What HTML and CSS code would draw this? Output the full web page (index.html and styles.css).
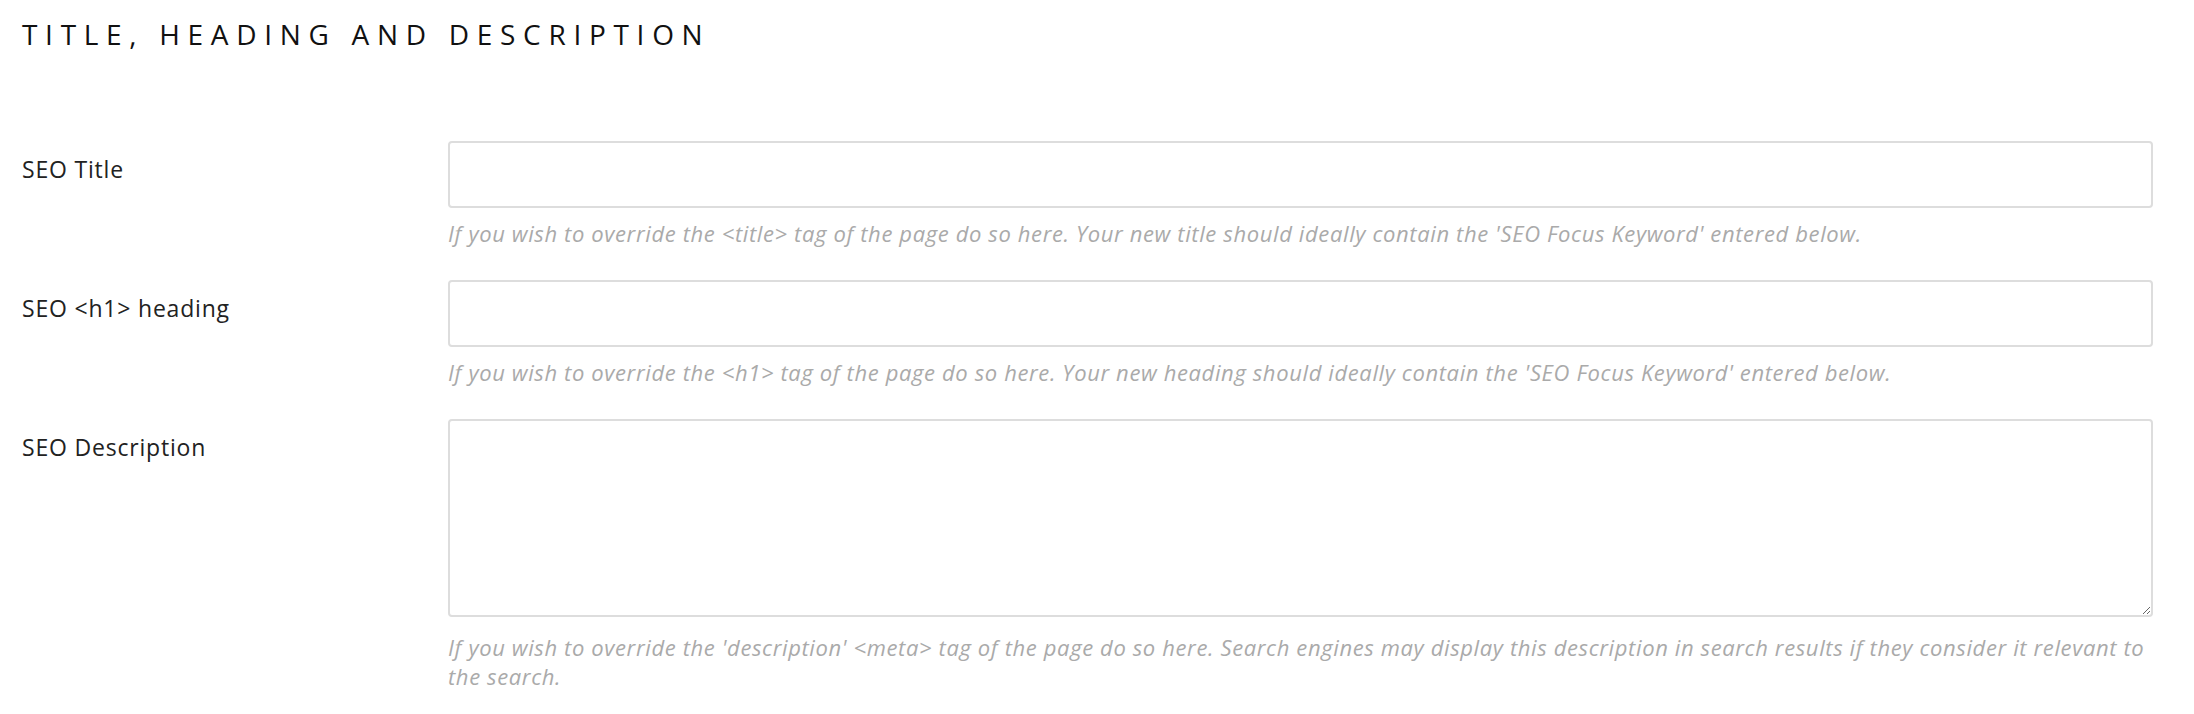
FILE: index.html
```html
<!DOCTYPE html>
<html lang="en">
<head>
  <meta charset="UTF-8">
  <title>SEO settings</title>
  <link rel="stylesheet" href="styles.css">
</head>
<body>
  <section class="seo-panel">
    <h2 class="panel-title">Title, Heading and Description</h2>

    <div class="field-row">
      <label class="field-label" for="seoTitle">SEO Title</label>
      <div class="field-body">
        <input type="text" id="seoTitle" class="field-input">
        <p class="field-help">If you wish to override the &lt;title&gt; tag of the page do so here. Your new title should ideally contain the 'SEO Focus Keyword' entered below.</p>
      </div>
    </div>

    <div class="field-row">
      <label class="field-label" for="seoHeading">SEO &lt;h1&gt; heading</label>
      <div class="field-body">
        <input type="text" id="seoHeading" class="field-input">
        <p class="field-help">If you wish to override the &lt;h1&gt; tag of the page do so here. Your new heading should ideally contain the 'SEO Focus Keyword' entered below.</p>
      </div>
    </div>

    <div class="field-row">
      <label class="field-label" for="seoDescription">SEO Description</label>
      <div class="field-body">
        <textarea id="seoDescription" class="field-input field-textarea"></textarea>
        <p class="field-help">If you wish to override the 'description' &lt;meta&gt; tag of the page do so here. Search engines may display this description in search results if they consider it relevant to the search.</p>
      </div>
    </div>
  </section>
</body>
</html>
```

FILE: styles.css
```css
body {
  margin: 0;
  background-color: #fff;
  color: #1a1a1a;
  font-family: "Open Sans", Lato, sans-serif;
}
.seo-panel {
  padding: 15px 41px 0 22px;
}
.panel-title {
  margin: 0 0 88px;
  font-size: 28px;
  line-height: 38px;
  font-weight: 400;
  letter-spacing: 7.7px;
  text-transform: uppercase;
  color: #111;
}
.field-row {
  display: grid;
  grid-template-columns: 426px 1fr;
  margin-bottom: 32px;
}
.field-label {
  padding-top: 13px;
  font-size: 23px;
  line-height: 31px;
  letter-spacing: 0.8px;
  color: #222;
}
.field-input {
  display: block;
  box-sizing: border-box;
  width: 100%;
  height: 67px;
  margin: 0;
  padding: 8px 14px;
  border: 2px solid #ddd;
  border-radius: 4px;
  font-family: inherit;
  font-size: 20px;
  background-color: #fff;
}
.field-textarea {
  height: 198px;
  margin-bottom: 16px;
}
.field-help {
  margin: 11px 0 0;
  font-size: 22px;
  line-height: 29px;
  letter-spacing: 0.62px;
  font-style: italic;
  color: #aaa;
}
```
